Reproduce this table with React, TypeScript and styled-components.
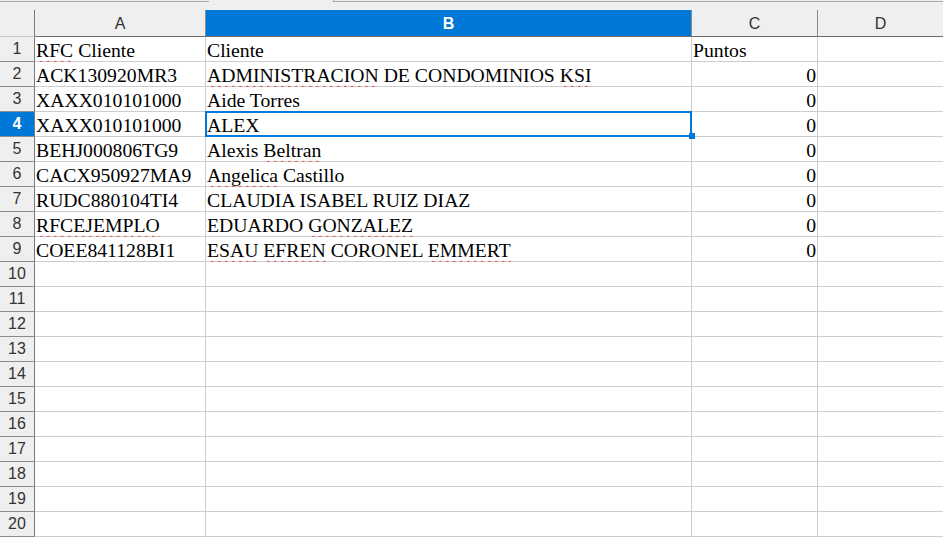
import styled, { createGlobalStyle, css } from "styled-components";

const GlobalStyle = createGlobalStyle`
  html, body {
    margin: 0;
    padding: 0;
    background: #ffffff;
    overflow: hidden;
  }
`;

type Cell = { text: string; spell?: string[]; num?: boolean };

const columns = [
  { name: "A", width: 171 },
  { name: "B", width: 486 },
  { name: "C", width: 126 },
  { name: "D", width: 126 },
];

const data: Cell[][] = [
  [{ text: "RFC Cliente", spell: ["RFC"] }, { text: "Cliente" }, { text: "Puntos" }],
  [
    { text: "ACK130920MR3" },
    { text: "ADMINISTRACION DE CONDOMINIOS KSI", spell: ["ADMINISTRACION", "KSI"] },
    { text: "0", num: true },
  ],
  [{ text: "XAXX010101000" }, { text: "Aide Torres", spell: ["Aide"] }, { text: "0", num: true }],
  [{ text: "XAXX010101000" }, { text: "ALEX" }, { text: "0", num: true }],
  [{ text: "BEHJ000806TG9" }, { text: "Alexis Beltran", spell: ["Beltran"] }, { text: "0", num: true }],
  [{ text: "CACX950927MA9" }, { text: "Angelica Castillo", spell: ["Angelica"] }, { text: "0", num: true }],
  [{ text: "RUDC880104TI4" }, { text: "CLAUDIA ISABEL RUIZ DIAZ" }, { text: "0", num: true }],
  [
    { text: "RFCEJEMPLO", spell: ["RFCEJEMPLO"] },
    { text: "EDUARDO GONZALEZ", spell: ["GONZALEZ"] },
    { text: "0", num: true },
  ],
  [
    { text: "COEE841128BI1" },
    { text: "ESAU EFREN CORONEL EMMERT", spell: ["ESAU", "EFREN", "EMMERT"] },
    { text: "0", num: true },
  ],
];

const ROWS = 20;
const activeCol = 1;
const activeRow = 3;

const Page = styled.div`
  width: 943px;
  height: 537px;
  background: #efefef;
  display: flex;
  flex-direction: column;
  overflow: hidden;
`;

const TopStrip = styled.div`
  height: 10px;
  display: flex;
  box-sizing: border-box;
`;

const StripLine = styled.div<{ $w?: number }>`
  ${({ $w }) => ($w ? css`width: ${$w}px;` : css`flex: 1;`)}
  height: 2px;
  border-bottom: 1px solid #a9a9a9;
  box-sizing: border-box;
`;

const StripGap = styled.div`
  width: 124px;
`;

const StripTab = styled.div`
  height: 2px;
  border-left: 1px solid #a9a9a9;
`;

const Sheet = styled.div`
  display: grid;
  grid-template-columns: 35px ${columns.map((c) => `${c.width}px`).join(" ")};
  grid-template-rows: 27px repeat(${ROWS}, 25px);
  position: relative;
`;

const Corner = styled.div`
  background: #efefef;
  border-right: 1px solid #7a7a7a;
  border-bottom: 1px solid #c8c8c8;
  box-sizing: border-box;
`;

const ColHead = styled.div<{ $active?: boolean }>`
  box-sizing: border-box;
  display: flex;
  align-items: center;
  justify-content: center;
  font-family: "Liberation Sans", Arial, sans-serif;
  font-size: 16px;
  border-right: 1px solid #8c8c8c;
  border-bottom: 1px solid #6d6d6d;
  background: ${({ $active }) => ($active ? "#0078d7" : "#efefef")};
  color: ${({ $active }) => ($active ? "#ffffff" : "#333333")};
  font-weight: ${({ $active }) => ($active ? 700 : 400)};
  padding-top: 1px;
`;

const RowHead = styled.div<{ $active?: boolean }>`
  box-sizing: border-box;
  display: flex;
  align-items: center;
  justify-content: center;
  font-family: "Liberation Sans", Arial, sans-serif;
  font-size: 16px;
  border-right: 1px solid #7a7a7a;
  border-bottom: 1px solid #8c8c8c;
  background: ${({ $active }) => ($active ? "#0078d7" : "#efefef")};
  color: ${({ $active }) => ($active ? "#ffffff" : "#333333")};
  font-weight: ${({ $active }) => ($active ? 700 : 400)};
`;

const DataCell = styled.div<{ $num?: boolean }>`
  box-sizing: border-box;
  background: #ffffff;
  border-right: 1px solid #cdcdcd;
  border-bottom: 1px solid #cdcdcd;
  font-family: "Liberation Serif", "Times New Roman", serif;
  font-size: 19.7px;
  line-height: 24px;
  color: #000000;
  white-space: nowrap;
  overflow: visible;
  padding: 1px 1px 0 1px;
  text-align: ${({ $num }) => ($num ? "right" : "left")};
`;

const Misspelt = styled.span`
  text-decoration: underline wavy #e8413d;
  text-decoration-thickness: 1px;
  text-underline-offset: 3px;
  text-decoration-skip-ink: none;
`;

const Cursor = styled.div`
  position: absolute;
  left: 205px;
  top: 101px;
  width: 487px;
  height: 26px;
  border: 2px solid #0078d7;
  box-sizing: border-box;
  pointer-events: none;
`;

const Handle = styled.div`
  position: absolute;
  left: 689px;
  top: 123px;
  width: 6px;
  height: 6px;
  background: #0078d7;
`;

function renderText(cell: Cell) {
  if (!cell.spell) return cell.text;
  return cell.text.split(" ").map((word, i, arr) => (
    <span key={i}>
      {cell.spell!.includes(word) ? <Misspelt>{word}</Misspelt> : word}
      {i < arr.length - 1 ? " " : ""}
    </span>
  ));
}

export default function App() {
  return (
    <>
      <GlobalStyle />
      <Page>
        <TopStrip>
          <StripLine $w={209} />
          <StripGap />
          <StripTab />
          <StripLine />
        </TopStrip>
        <Sheet>
          <Corner />
          {columns.map((c, i) => (
            <ColHead key={c.name} $active={i === activeCol}>
              {c.name}
            </ColHead>
          ))}
          {Array.from({ length: ROWS }).map((_, r) => {
            const row = data[r] || [];
            return [
              <RowHead key={`h${r}`} $active={r === activeRow}>
                {r + 1}
              </RowHead>,
              ...columns.map((c, ci) => {
                const cell = row[ci];
                return (
                  <DataCell key={`${r}-${c.name}`} $num={cell?.num}>
                    {cell ? renderText(cell) : null}
                  </DataCell>
                );
              }),
            ];
          })}
          <Cursor />
          <Handle />
        </Sheet>
      </Page>
    </>
  );
}
